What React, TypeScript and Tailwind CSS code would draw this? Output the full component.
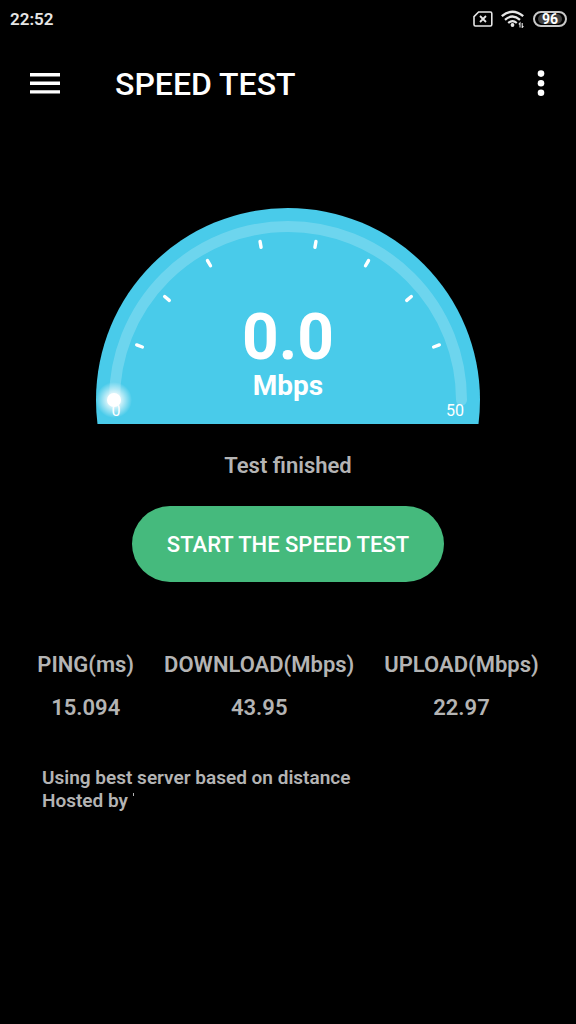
const TICKS = [20, 40, 60, 80, 100, 120, 140, 160];

const RESULTS = [
  { label: "PING(ms)", value: "15.094" },
  { label: "DOWNLOAD(Mbps)", value: "43.95" },
  { label: "UPLOAD(Mbps)", value: "22.97" },
];

const StatusBar = () => {
  return (
    <div className="flex h-[38px] items-center justify-between pl-[10px] pr-[9px] text-[#e6e6e6]">
      <span className="text-[17px] font-semibold leading-5">22:52</span>
      <div className="flex items-center gap-2">
        {/* No SIM */}
        <svg width="20" height="16" viewBox="0 0 20 16" fill="none" stroke="currentColor" aria-label="No SIM">
          <path d="M5.6 1H17.4Q18.8 1 18.8 2.4V13.6Q18.8 15 17.4 15H2.4Q1 15 1 13.6V5.6Z" strokeWidth="1.6" />
          <path d="M7 5 13 11M13 5 7 11" strokeWidth="1.8" />
        </svg>
        {/* Wifi with traffic marks */}
        <svg width="24" height="18" viewBox="0 0 24 18" fill="none" stroke="currentColor" aria-label="Wifi">
          <path d="M0.8 6.2Q11.5-2.8 22.2 6.2" strokeWidth="2.4" />
          <path d="M4 9.8Q11.5 3.2 19 9.8" strokeWidth="2.3" />
          <path d="M7.2 13Q11.5 9.2 15.8 13" strokeWidth="2.1" />
          <circle cx="11.5" cy="15" r="1.9" fill="currentColor" stroke="none" />
          <path d="M19 17.5V13L17.8 14.4M21.2 13V17.5L22.4 16.1" strokeWidth="1.1" />
        </svg>
        <div className="flex h-4 w-[34px] items-center justify-center rounded-full border-2 border-[#c8c8c8] p-px">
          <span className="flex h-full w-6 items-center justify-center rounded-full bg-[#3f3f3f] text-[14px] font-bold leading-none text-white">
            96
          </span>
        </div>
      </div>
    </div>
  );
};

const Header = () => {
  return (
    <header className="flex h-[92px] items-center pl-[30px] pr-6">
      <button type="button" aria-label="Menu" className="text-white">
        <svg width="30" height="22" viewBox="0 0 30 22" fill="currentColor">
          <path d="M0 0H30V3.4H0ZM0 8.6H30V12H0ZM0 17.2H30V20.6H0Z" />
        </svg>
      </button>
      <h1 className="ml-[55px] flex-1 text-[32px] font-medium leading-10 text-white">SPEED TEST</h1>
      <button type="button" aria-label="More options" className="flex w-[22px] justify-center text-white">
        <svg width="8" height="28" viewBox="0 0 8 28" fill="currentColor">
          <circle cx="4" cy="3.6" r="3.3" />
          <circle cx="4" cy="13.2" r="3.3" />
          <circle cx="4" cy="22.8" r="3.3" />
        </svg>
      </button>
    </header>
  );
};

const Gauge = () => {
  return (
    <div className="relative w-2/3">
      <svg viewBox="0 0 384 216" className="block w-full">
        <defs>
          <radialGradient id="glow">
            <stop offset="0.35" stopColor="#fff" stopOpacity="0.8" />
            <stop offset="1" stopColor="#fff" stopOpacity="0" />
          </radialGradient>
        </defs>
        <circle cx="192" cy="192" r="192" fill="#49cbea" />
        <path
          d="M18.5 192A173.5 173.5 0 0 1 365.5 192"
          fill="none"
          stroke="#fff"
          strokeOpacity="0.2"
          strokeWidth="11"
          strokeLinecap="round"
        />
        {TICKS.map((angle) => (
          <path
            key={angle}
            d="M31 192H37"
            stroke="#fff"
            strokeWidth="3.4"
            strokeLinecap="round"
            transform={`rotate(${angle} 192 192)`}
          />
        ))}
        <circle cx="18" cy="192" r="18" fill="url(#glow)" />
        <circle cx="18" cy="192" r="7" fill="#fff" />
        <text x="20" y="208" textAnchor="middle" fontSize="16" fill="#fff">0</text>
        <text x="359" y="208" textAnchor="middle" fontSize="16" fill="#fff">50</text>
      </svg>
      {/* Reading over the dial */}
      <div className="absolute inset-x-0 bottom-[22px] text-center font-bold text-white">
        <p className="text-[64px] leading-16">0.0</p>
        <p className="text-[28px] leading-8">Mbps</p>
      </div>
    </div>
  );
};

export default function App() {
  return (
    <div className="min-h-screen bg-black font-['Roboto',sans-serif] text-[#b4b4b4]">
      <StatusBar />
      <Header />
      <main className="flex flex-col items-center pt-[78px]">
        <Gauge />
        <p className="mt-7 text-[22px] font-semibold leading-7">Test finished</p>
        <button
          type="button"
          className="mt-[26px] h-[76px] rounded-full bg-[#45ba7d] px-[35px] text-[22px] font-medium text-white"
        >
          START THE SPEED TEST
        </button>
        <table className="mt-[65px] text-center text-[22px] font-semibold leading-7">
          <thead>
            <tr>
              {RESULTS.map((r) => (
                <th key={r.label} scope="col" className="px-[15px] py-1 font-semibold">
                  {r.label}
                </th>
              ))}
            </tr>
          </thead>
          <tbody>
            <tr>
              {RESULTS.map((r) => (
                <td key={r.label} className="px-[15px] pt-[11px]">
                  {r.value}
                </td>
              ))}
            </tr>
          </tbody>
        </table>
        <div className="mt-11 w-full px-[42px] text-[19px] font-semibold leading-[23px]">
          <p>Using best server based on distance</p>
          <p className="flex gap-[5px]">
            Hosted by
            <span className="mt-1 h-[3px] w-px bg-current" />
          </p>
        </div>
      </main>
    </div>
  );
}
